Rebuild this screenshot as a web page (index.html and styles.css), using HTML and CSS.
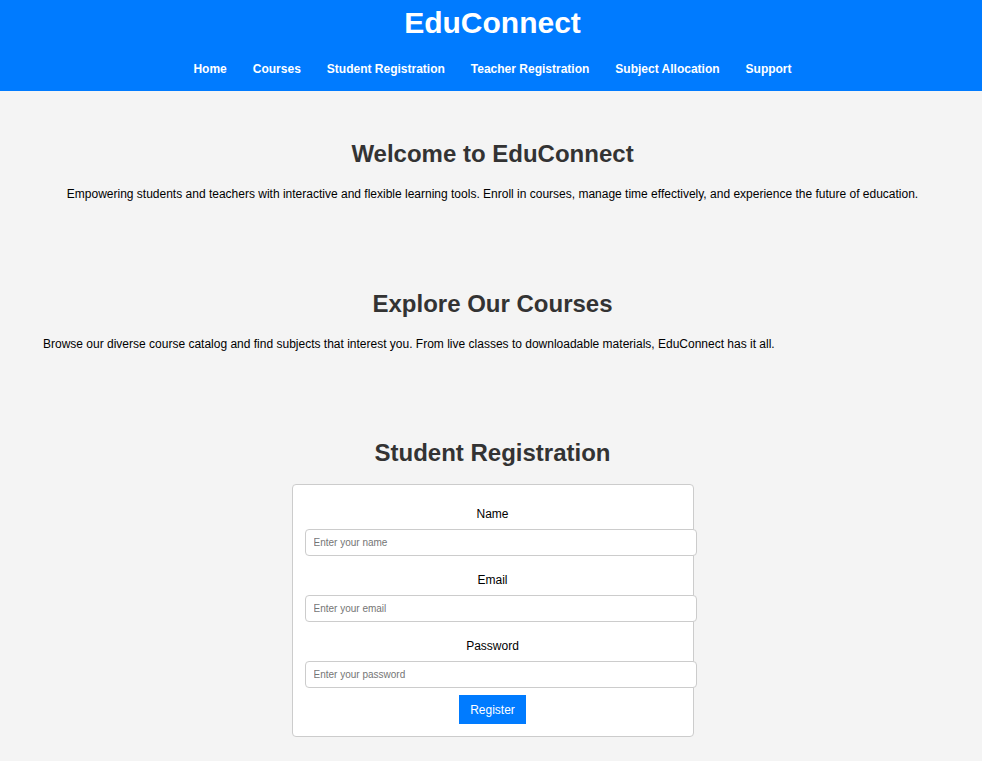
FILE: index.html
```html
<!DOCTYPE html>
<html lang="en">
<head>
<meta charset="utf-8">
<title>EduConnect</title>
<link rel="stylesheet" href="styles.css">
</head>
<body>
<header class="site-header">
  <h1 class="brand">EduConnect</h1>
  <nav class="nav">
    <a href="#" class="nav-link">Home</a>
    <a href="#" class="nav-link">Courses</a>
    <a href="#" class="nav-link">Student Registration</a>
    <a href="#" class="nav-link">Teacher Registration</a>
    <a href="#" class="nav-link">Subject Allocation</a>
    <a href="#" class="nav-link">Support</a>
  </nav>
</header>
<main class="main">
  <section class="section section-center">
    <h2 class="section-title">Welcome to EduConnect</h2>
    <p class="section-text">Empowering students and teachers with interactive and flexible learning tools. Enroll in courses, manage time effectively, and experience the future of education.</p>
  </section>
  <section class="section">
    <h2 class="section-title">Explore Our Courses</h2>
    <p class="section-text">Browse our diverse course catalog and find subjects that interest you. From live classes to downloadable materials, EduConnect has it all.</p>
  </section>
  <section class="section">
    <h2 class="section-title">Student Registration</h2>
    <form class="reg-form">
      <label class="field-label" for="name">Name</label>
      <input class="field-input" id="name" type="text" placeholder="Enter your name">
      <label class="field-label" for="email">Email</label>
      <input class="field-input" id="email" type="email" placeholder="Enter your email">
      <label class="field-label" for="password">Password</label>
      <input class="field-input" id="password" type="password" placeholder="Enter your password">
      <button class="submit-btn" type="button">Register</button>
    </form>
  </section>
</main>
</body>
</html>
```
FILE: styles.css
```css
* { box-sizing: content-box; }

body {
  margin: 0;
  padding: 0 0 0 3px;
  background: #f4f4f4;
  font-family: "Liberation Sans", Arial, sans-serif;
  color: #000;
}

.site-header {
  background: #007bff;
  color: #fff;
  margin-left: -3px;
  padding: 6px 0 15px 3px;
  text-align: center;
}

.brand {
  margin: 0;
  font-size: 30px;
  line-height: 34px;
  font-weight: bold;
}

.nav {
  margin-top: 22px;
  display: flex;
  justify-content: center;
  gap: 26px;
}

.nav-link {
  color: #fff;
  text-decoration: none;
  font-weight: bold;
  font-size: 12px;
  line-height: 14px;
}

.main {
  padding-top: 49px;
}

.section {
  padding: 0 40px;
}

.section + .section {
  margin-top: 88.5px;
}

.section-center .section-text {
  text-align: center;
}

.section-title {
  margin: 0;
  text-align: center;
  font-size: 24px;
  line-height: 28px;
  color: #333;
}

.section-text {
  margin: 19px 0 0;
  font-size: 12px;
  line-height: 14px;
}

.reg-form {
  width: 376px;
  margin: 17px auto 0;
  padding: 12px;
  background: #fff;
  border: 1px solid #ccc;
  border-radius: 4px;
  display: flex;
  flex-direction: column;
}

.field-label {
  display: block;
  margin: 10px 0 8px;
  text-align: center;
  font-size: 12px;
  line-height: 14px;
}

.field-input {
  display: block;
  width: 374px;
  margin: 0 0 7px;
  padding: 7px 8px;
  font-family: "Liberation Sans", Arial, sans-serif;
  font-size: 10px;
  line-height: 11px;
  height: 11px;
  border: 1px solid #ccc;
  border-radius: 4px;
  background: #fff;
}

.field-input::placeholder {
  color: #757575;
}

.submit-btn {
  align-self: center;
  margin: 0;
  padding: 7.5px 11px;
  background: #007bff;
  color: #fff;
  border: none;
  border-radius: 0;
  font-family: "Liberation Sans", Arial, sans-serif;
  font-size: 12px;
  line-height: 14px;
  cursor: pointer;
}
```
